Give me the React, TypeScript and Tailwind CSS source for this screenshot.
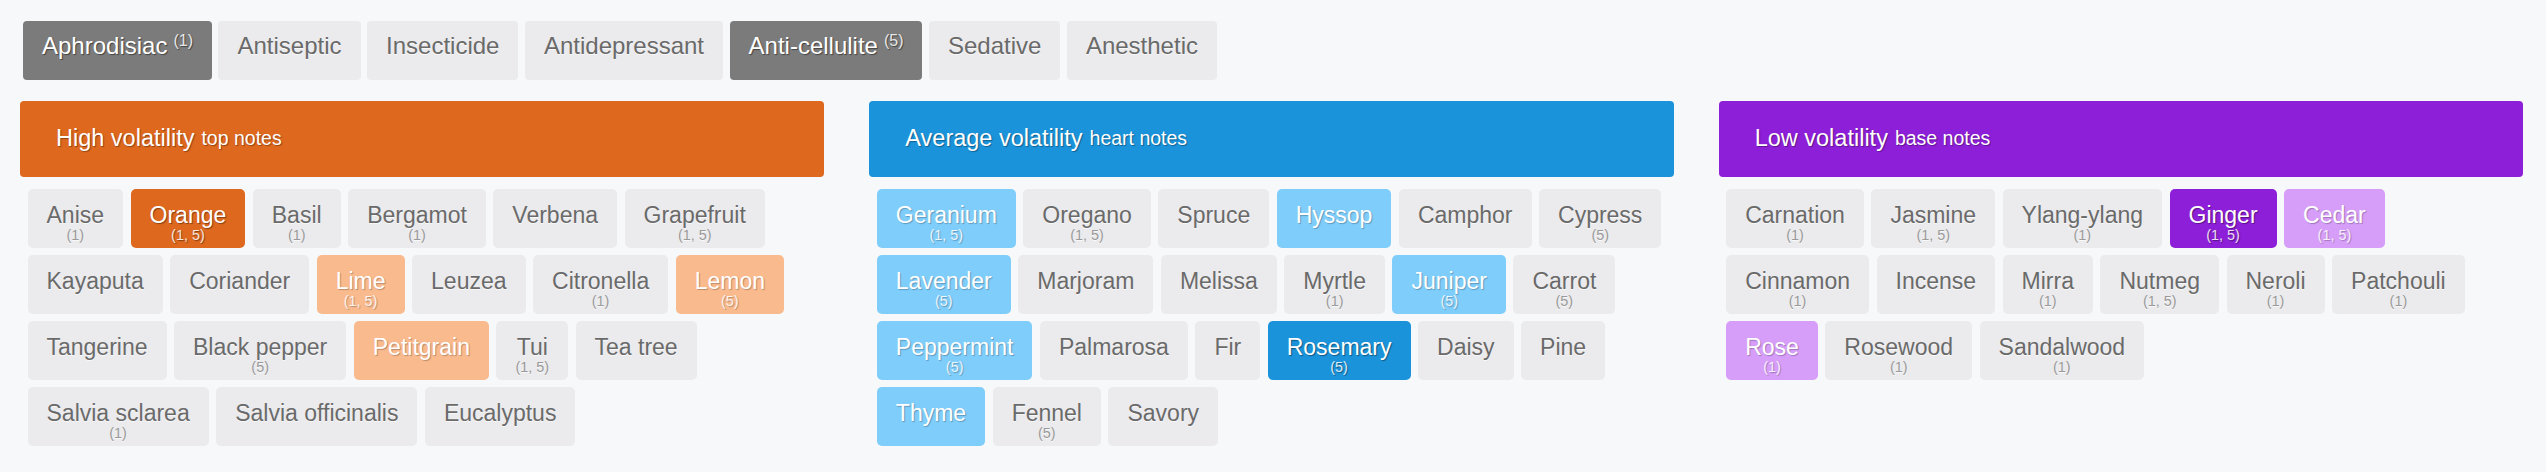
type Note = { name: string; sub?: string; state?: 'light' | 'dark' };

const properties = [
  { name: 'Aphrodisiac', count: '(1)', active: true },
  { name: 'Antiseptic' },
  { name: 'Insecticide' },
  { name: 'Antidepressant' },
  { name: 'Anti-cellulite', count: '(5)', active: true },
  { name: 'Sedative' },
  { name: 'Anesthetic' },
];

const columns: {
  title: string;
  small: string;
  bar: string;
  light: string;
  notes: Note[];
}[] = [
  {
    title: 'High volatility',
    small: 'top notes',
    bar: 'bg-[#dd681e]',
    light: 'bg-[#f9ba8e]',
    notes: [
      { name: 'Anise', sub: '(1)' },
      { name: 'Orange', sub: '(1, 5)', state: 'dark' },
      { name: 'Basil', sub: '(1)' },
      { name: 'Bergamot', sub: '(1)' },
      { name: 'Verbena' },
      { name: 'Grapefruit', sub: '(1, 5)' },
      { name: 'Kayaputa' },
      { name: 'Coriander' },
      { name: 'Lime', sub: '(1, 5)', state: 'light' },
      { name: 'Leuzea' },
      { name: 'Citronella', sub: '(1)' },
      { name: 'Lemon', sub: '(5)', state: 'light' },
      { name: 'Tangerine' },
      { name: 'Black pepper', sub: '(5)' },
      { name: 'Petitgrain', state: 'light' },
      { name: 'Tui', sub: '(1, 5)' },
      { name: 'Tea tree' },
      { name: 'Salvia sclarea', sub: '(1)' },
      { name: 'Salvia officinalis' },
      { name: 'Eucalyptus' },
    ],
  },
  {
    title: 'Average volatility',
    small: 'heart notes',
    bar: 'bg-[#1b93db]',
    light: 'bg-[#7fcdfb]',
    notes: [
      { name: 'Geranium', sub: '(1, 5)', state: 'light' },
      { name: 'Oregano', sub: '(1, 5)' },
      { name: 'Spruce' },
      { name: 'Hyssop', state: 'light' },
      { name: 'Camphor' },
      { name: 'Cypress', sub: '(5)' },
      { name: 'Lavender', sub: '(5)', state: 'light' },
      { name: 'Marjoram' },
      { name: 'Melissa' },
      { name: 'Myrtle', sub: '(1)' },
      { name: 'Juniper', sub: '(5)', state: 'light' },
      { name: 'Carrot', sub: '(5)' },
      { name: 'Peppermint', sub: '(5)', state: 'light' },
      { name: 'Palmarosa' },
      { name: 'Fir' },
      { name: 'Rosemary', sub: '(5)', state: 'dark' },
      { name: 'Daisy' },
      { name: 'Pine' },
      { name: 'Thyme', state: 'light' },
      { name: 'Fennel', sub: '(5)' },
      { name: 'Savory' },
    ],
  },
  {
    title: 'Low volatility',
    small: 'base notes',
    bar: 'bg-[#8e1fd9]',
    light: 'bg-[#d69ef9]',
    notes: [
      { name: 'Carnation', sub: '(1)' },
      { name: 'Jasmine', sub: '(1, 5)' },
      { name: 'Ylang-ylang', sub: '(1)' },
      { name: 'Ginger', sub: '(1, 5)', state: 'dark' },
      { name: 'Cedar', sub: '(1, 5)', state: 'light' },
      { name: 'Cinnamon', sub: '(1)' },
      { name: 'Incense' },
      { name: 'Mirra', sub: '(1)' },
      { name: 'Nutmeg', sub: '(1, 5)' },
      { name: 'Neroli', sub: '(1)' },
      { name: 'Patchouli', sub: '(1)' },
      { name: 'Rose', sub: '(1)', state: 'light' },
      { name: 'Rosewood', sub: '(1)' },
      { name: 'Sandalwood', sub: '(1)' },
    ],
  },
];

export default function App() {
  return (
    <div className="min-h-screen bg-[#f7f8fa] px-5 pr-[23px] pt-[21px] font-['Liberation_Sans',Arial,sans-serif]">
      {/* property filter */}
      <div className="flex gap-[6.5px] pl-[3px]">
        {properties.map((p) => (
          <div
            key={p.name}
            className={`h-[59px] cursor-pointer rounded-[4px] px-[19px] pt-[10px] text-[24px] leading-[29px] ${
              p.active
                ? 'bg-[#7b7b7c] text-white [text-shadow:1px_1px_1px_rgba(0,0,0,0.45)]'
                : 'bg-[#ebebed] text-[#6a6a6a] [text-shadow:0_1px_0_rgba(255,255,255,0.7)]'
            }`}
          >
            {p.name}
            {p.count && <sup className="ml-[6px] text-[16px] text-[#e6e6e6]">{p.count}</sup>}
          </div>
        ))}
      </div>

      {/* volatility columns */}
      <div className="mt-[21px] grid grid-cols-3 gap-x-[45px]">
        {columns.map((col) => (
          <div key={col.title}>
            <div
              className={`flex h-[76px] items-center rounded-[4px] pl-[36px] text-white [text-shadow:1px_1px_1px_rgba(0,0,0,0.35)] ${col.bar}`}
            >
              <span className="text-[23.5px]">{col.title}</span>
              <span className="ml-[7px] text-[19.5px]">{col.small}</span>
            </div>

            <div className="mt-[12px] flex flex-wrap gap-x-[7.5px] gap-y-[7px] pl-[7.5px]">
              {col.notes.map((n) => {
                const color =
                  n.state === 'dark'
                    ? `${col.bar} text-white [text-shadow:1px_1px_1px_rgba(0,0,0,0.4)]`
                    : n.state === 'light'
                      ? `${col.light} text-white [text-shadow:1px_1px_1px_rgba(0,0,0,0.25)]`
                      : 'bg-[#ebebed] text-[#6a6a6a] [text-shadow:0_1px_0_rgba(255,255,255,0.7)]';
                return (
                  <div
                    key={n.name}
                    className={`flex h-[59px] flex-col items-center rounded-[5px] px-[19px] pt-[14px] ${color}`}
                  >
                    <span className="text-[23px] leading-[25px]">{n.name}</span>
                    {n.sub && (
                      <span
                        className={`text-[14.4px] leading-[15px] ${
                          n.state ? 'text-white/85' : 'text-[#9a9a9a]'
                        }`}
                      >
                        {n.sub}
                      </span>
                    )}
                  </div>
                );
              })}
            </div>
          </div>
        ))}
      </div>
    </div>
  );
}
